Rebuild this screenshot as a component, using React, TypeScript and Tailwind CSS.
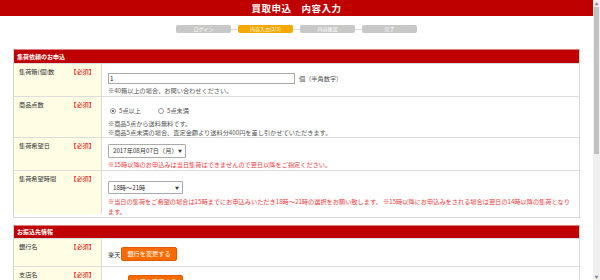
const font = { fontFamily: '"Noto Sans CJK JP", "Noto Sans", sans-serif' };

const steps = [
    { label: 'ログイン', active: false },
    { label: '内容入力(2/3)', active: true },
    { label: '内容確認', active: false },
    { label: '完了', active: false },
];

function Required() {
    return <span className="text-[#e00000]">【必須】</span>;
}

function Label({ text, height }: { text: string; height: string }) {
    return (
        <div className={`w-[88px] shrink-0 bg-[#fffde3] border-r border-[#dcdcdc] pl-[5px] pr-[6px] pt-[4px] flex justify-between ${height}`}>
            <span>{text}</span>
            <Required />
        </div>
    );
}

function Radio({ checked, label }: { checked?: boolean; label: string }) {
    return (
        <span className="flex items-center gap-[3px]">
            <span className="w-[6px] h-[6px] rounded-full border border-[#999] bg-white flex items-center justify-center">
                {checked && <span className="w-[2px] h-[2px] rounded-full bg-[#444]" />}
            </span>
            {label}
        </span>
    );
}

function Select({ value, width, height }: { value: string; width: string; height: string }) {
    return (
        <div className={`${width} ${height} border border-[#aaa] rounded-[1px] bg-white flex items-center justify-between pl-[4px] pr-[3px] text-[#333] whitespace-nowrap`}>
            <span>{value}</span>
            <span className="text-[4px]">▼</span>
        </div>
    );
}

function OrangeButton({ text }: { text: string }) {
    return (
        <span className="inline-flex items-center justify-center h-[14px] px-[5px] bg-[#f86b00] border border-[#e05a00] rounded-[2px] text-white">
            {text}
        </span>
    );
}

export default function App() {
    return (
        <div className="w-[600px] h-[280px] flex overflow-hidden bg-white text-[6.2px] leading-[8px] text-[#333]" style={font}>
            <div className="flex-1 flex flex-col">
                {/* header */}
                <div className="h-[16px] shrink-0 bg-[#bf0000] text-white font-bold text-[9.5px] flex items-center justify-center tracking-[0.5px]">
                    買取申込　内容入力
                </div>

                {/* steps */}
                <div className="mt-[9px] flex items-center justify-center">
                    {steps.map((s, i) => (
                        <div key={s.label} className="flex items-center">
                            {i > 0 && <div className="w-[7px] h-[1px] bg-[#d8d8d8]" />}
                            <div className={`w-[55px] h-[8px] rounded-[2px] flex items-center justify-center text-white text-[5px] leading-[6px] ${s.active ? 'bg-[#f5a800]' : 'bg-[#c8c8c8]'}`}>
                                {s.label}
                            </div>
                        </div>
                    ))}
                </div>

                {/* section 1 */}
                <div className="mt-[16px] mx-[13px] border border-[#d6d6d6] border-t-[#e08080]">
                    <div className="h-[13px] bg-[#bf0000] text-white font-bold text-[6px] flex items-center pl-[3px]">
                        集荷依頼のお申込
                    </div>

                    <div className="flex border-t border-[#dcdcdc]">
                        <Label text="集荷箱(個)数" height="h-[32px]" />
                        <div className="flex-1 pl-[6px] pt-[9px]">
                            <div className="flex items-center gap-[4px]">
                                <div className="w-[187px] h-[11px] border border-[#aaa] bg-white flex items-center px-[1px] text-[#222]">1</div>
                                <span className="text-[#555]">個（半角数字）</span>
                            </div>
                            <div className="mt-[3px] text-[#555]">※40箱以上の場合、お問い合わせください。</div>
                        </div>
                    </div>

                    <div className="flex border-t border-[#dcdcdc]">
                        <Label text="商品点数" height="h-[40px]" />
                        <div className="flex-1 pl-[6px] pt-[10px] text-[#555]">
                            <div className="flex items-center gap-[17px] pl-[2px]">
                                <Radio checked label="5点以上" />
                                <Radio label="5点未満" />
                            </div>
                            <div className="mt-[5px] leading-[8.5px]">※商品5点から送料無料です。</div>
                            <div className="leading-[8.5px]">※商品5点未満の場合、査定金額より送料分400円を差し引かせていただきます。</div>
                        </div>
                    </div>

                    <div className="flex border-t border-[#dcdcdc]">
                        <Label text="集荷希望日" height="h-[32px]" />
                        <div className="flex-1 pl-[6px] pt-[6px]">
                            <Select value="2017年08月07日（月）" width="w-[78px]" height="h-[14px]" />
                            <div className="mt-[3px] text-[#f03c3c]">※15時以降のお申込みは当日集荷はできませんので翌日以降をご指定ください。</div>
                        </div>
                    </div>

                    <div className="flex border-t border-[#dcdcdc]">
                        <Label text="集荷希望時間" height="h-[43px]" />
                        <div className="flex-1 pl-[6px] pt-[10px]">
                            <Select value="18時～21時" width="w-[75px]" height="h-[13px]" />
                            <div className="mt-[3px] pr-[6px] text-[#f03c3c] leading-[10px]">
                                ※当日の集荷をご希望の場合は15時までにお申込みいただき18時～21時の選択をお願い致します。 ※15時以降にお申込みをされる場合は翌日の14時以降の集荷となります。
                            </div>
                        </div>
                    </div>
                </div>

                {/* section 2 */}
                <div className="mt-[7px] mx-[13px] border border-[#d6d6d6] border-t-[#e08080]">
                    <div className="h-[12px] bg-[#bf0000] text-white font-bold text-[6px] flex items-center pl-[3px]">
                        お振込先情報
                    </div>

                    <div className="flex border-t border-[#dcdcdc]">
                        <Label text="銀行名" height="h-[27px]" />
                        <div className="flex-1 pl-[6px] pt-[8px] flex items-start gap-[1px]">
                            <span className="mt-[4px]">楽天</span>
                            <OrangeButton text="銀行を変更する" />
                        </div>
                    </div>

                    <div className="flex border-t border-[#dcdcdc]">
                        <Label text="支店名" height="h-[30px]" />
                        <div className="flex-1 pl-[6px] pt-[8px] flex items-start gap-[1px]">
                            <span className="mt-[4px]">アルト</span>
                            <OrangeButton text="支店を変更する" />
                        </div>
                    </div>
                </div>
            </div>

            {/* scrollbar */}
            <div className="w-[7px] shrink-0 bg-[#f0f0f0] flex flex-col items-center">
                <div className="h-[7px] flex items-center justify-center text-[4px] leading-[4px] text-[#888]">▲</div>
                <div className="w-[5px] h-[147px] bg-[#c1c1c1]" />
                <div className="flex-1" />
                <div className="h-[7px] flex items-center justify-center text-[4px] leading-[4px] text-[#888]">▼</div>
            </div>
        </div>
    );
}
